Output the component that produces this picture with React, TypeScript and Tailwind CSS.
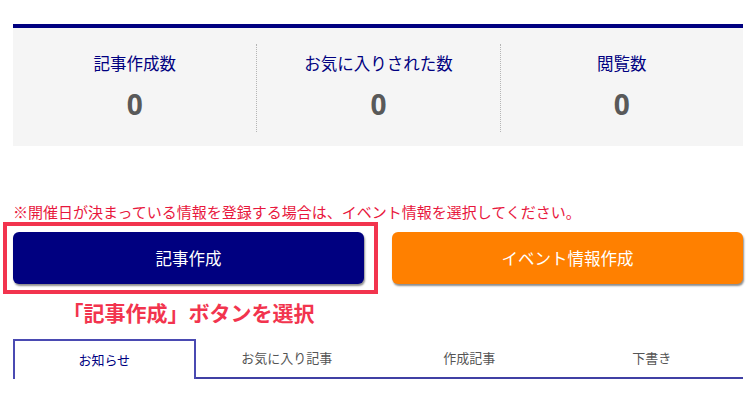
const jp = "font-['Noto_Sans_CJK_JP','Noto_Sans',sans-serif]"

const stats = [
  { label: "記事作成数", value: 0 },
  { label: "お気に入りされた数", value: 0 },
  { label: "閲覧数", value: 0 },
]

const tabs = ["お知らせ", "お気に入り記事", "作成記事", "下書き"]

export default function App() {
  return (
    <div className={`w-[756px] h-[404px] bg-white overflow-hidden px-[13px] pt-[24px] ${jp}`}>
      {/* stats */}
      <div className="border-t-4 border-[#000080] bg-[#f5f5f5] grid grid-cols-3 pt-[16px] pb-[14px]">
        {stats.map((s, i) => (
          <div
            key={s.label}
            className={`h-[88px] flex flex-col items-center ${i > 0 ? "border-l border-dotted border-[#b5b5b5]" : ""}`}
          >
            <p className="text-[16.5px] leading-none text-[#000080] mt-[11px]">{s.label}</p>
            <p className="font-['Open_Sans',sans-serif] font-bold text-[28px] leading-none text-[#595959] mt-[18px]">
              {s.value}
            </p>
          </div>
        ))}
      </div>

      <p className="mt-[58px] text-[15px] leading-none text-[#e8173d]">
        ※開催日が決まっている情報を登録する場合は、イベント情報を選択してください。
      </p>

      {/* buttons */}
      <div className="grid grid-cols-2 gap-[28px] mt-[13px]">
        <div className="flex flex-col items-center">
          <div className="relative w-full">
            <button className="w-full h-[52px] rounded-[6px] bg-[#000080] text-white text-[16.5px] shadow-[1px_2px_2px_rgba(0,0,0,0.45)]">
              記事作成
            </button>
            <div className="absolute -left-[10px] -top-[10px] -right-[14px] -bottom-[10px] border-4 border-[#f2344e] pointer-events-none" />
          </div>
          <p className="mt-[18px] text-[21px] leading-none font-bold text-[#f2344e]">「記事作成」ボタンを選択</p>
        </div>
        <div>
          <button className="w-full h-[52px] rounded-[6px] bg-[#ff8000] text-white text-[16.5px] shadow-[1px_2px_2px_rgba(0,0,0,0.45)]">
            イベント情報作成
          </button>
        </div>
      </div>

      {/* tabs */}
      <div className="grid grid-cols-4 mt-[16px]">
        {tabs.map((t, i) =>
          i === 0 ? (
            <div
              key={t}
              className="h-[40px] flex items-center justify-center border-2 border-b-0 border-[#4a4ab2] text-[13px] text-[#000080]"
            >
              {t}
            </div>
          ) : (
            <div
              key={t}
              className="h-[40px] flex items-center justify-center border-b-2 border-[#4040a4] text-[13px] text-[#555]"
            >
              {t}
            </div>
          )
        )}
      </div>
    </div>
  )
}
